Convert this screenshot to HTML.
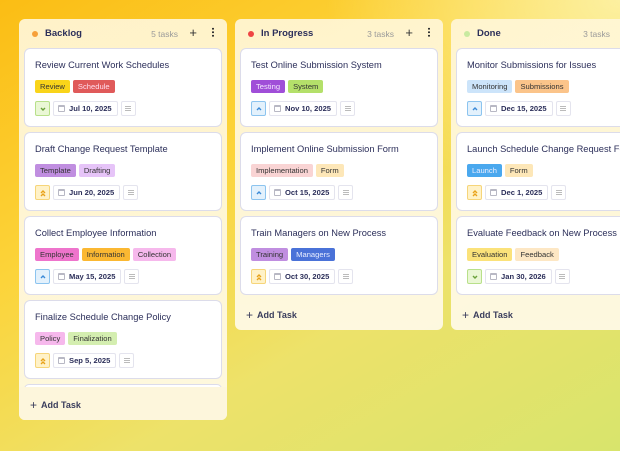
<!DOCTYPE html>
<html><head><meta charset="utf-8"><style>
*{box-sizing:border-box;margin:0;padding:0}
body{width:620px;height:451px;overflow:hidden;font-family:"Liberation Sans",sans-serif;color:#2c2f5a;
background:radial-gradient(ellipse 420px 300px at 620px 0px,#fdf0a0 0%,rgba(253,236,140,0) 70%),linear-gradient(150deg,#fbbd14 0%,#fcd43a 35%,#ede26a 65%,#d8e46c 100%);position:relative}
.col{position:absolute;top:19px;width:208px;border-radius:6px;background:linear-gradient(180deg,rgba(255,246,214,.93),rgba(255,250,232,.93));}
.hd{position:absolute;top:0;left:0;right:0;height:29px;display:flex;align-items:center;padding-left:13px;font-size:9.5px;font-weight:bold}
.dot{width:6px;height:6px;border-radius:50%;margin-right:7px}
.cnt{position:absolute;right:49px;top:10px;font-size:8.5px;color:#9a9a9a;font-weight:normal}
.plus{position:absolute;right:30px;top:6px;font-size:13px;font-weight:normal;color:#333}
.more{position:absolute;right:13px;top:8px;width:2px;height:10px;background:radial-gradient(circle,#333 0.9px,transparent 1.1px) 0 0/2px 3.5px}
.card{position:absolute;left:5px;width:198px;height:79px;background:#fff;border:1px solid #dcdcea;border-radius:6px}
.t{position:absolute;left:10px;top:11px;font-size:9.3px;white-space:nowrap}
.tags{position:absolute;left:10px;top:31px;display:flex;gap:3px}
.tag{height:13px;line-height:13px;padding:0 5px;border-radius:2px;font-size:7.6px;color:#333}
.ft{position:absolute;left:10px;top:52px;display:flex;gap:3px}
.pr{width:15px;height:15px;border-radius:2px;border:1px solid;display:flex;align-items:center;justify-content:center}
.pr svg{width:8px;height:8px;fill:none;stroke:currentColor;stroke-width:1.4}
.dt{height:15px;border:1px solid #e4e4ee;border-radius:2px;padding:0 5px 0 4px;font-size:7.6px;font-weight:bold;display:flex;align-items:center;gap:4px}
.cal{width:7px;height:7px;border:1px solid #b8b8c4;border-top-width:2px;border-radius:1px}
.ds{width:15px;height:15px;border:1px solid #e4e4ee;border-radius:2px;display:flex;align-items:center;justify-content:center}
.ds i{width:6px;height:5px;border-top:1px solid #bbb;border-bottom:1px solid #bbb;position:relative}
.ds i:after{content:"";position:absolute;left:0;top:1px;width:6px;border-top:1px solid #bbb}
.add{position:absolute;left:11px;font-size:9px;font-weight:bold;color:#3a3d5c}
.add b{font-weight:normal;font-size:12px;margin-right:4px;position:relative;top:1px}
.lo{background:#eaf7d5;border-color:#b8e08a;color:#6aa13a}
.md{background:#e3f1fc;border-color:#8cc4ef;color:#3b8ad8}
.hi{background:#fff2c8;border-color:#f6d57a;color:#e8a21a}
</style></head><body>
<svg width="0" height="0" style="position:absolute"><defs>
<symbol id="dn" viewBox="0 0 8 8"><path d="M2 3l2 2 2-2"/></symbol>
<symbol id="up" viewBox="0 0 8 8"><path d="M2 5l2-2 2 2"/></symbol>
<symbol id="uu" viewBox="0 0 8 8"><path d="M2 4l2-2 2 2M2 7l2-2 2 2"/></symbol>
</defs></svg>

<div class="col" style="left:19px;height:401px">
<div class="hd"><span class="dot" style="background:#f6a03a"></span>Backlog<span class="cnt">5 tasks</span><span class="plus">+</span><span class="more"></span></div>
<div class="card" style="top:29px"><div class="t">Review Current Work Schedules</div><div class="tags"><span class="tag" style="background:#f9d41a">Review</span><span class="tag" style="background:#e05a5a;color:#fde">Schedule</span></div><div class="ft"><span class="pr lo"><svg><use href="#dn"/></svg></span><span class="dt"><i class="cal"></i>Jul 10, 2025</span><span class="ds"><i></i></span></div></div>
<div class="card" style="top:113px"><div class="t">Draft Change Request Template</div><div class="tags"><span class="tag" style="background:#c08ee0">Template</span><span class="tag" style="background:#e6c4f8">Drafting</span></div><div class="ft"><span class="pr hi"><svg><use href="#uu"/></svg></span><span class="dt"><i class="cal"></i>Jun 20, 2025</span><span class="ds"><i></i></span></div></div>
<div class="card" style="top:197px"><div class="t">Collect Employee Information</div><div class="tags"><span class="tag" style="background:#ee74cc">Employee</span><span class="tag" style="background:#fbb832">Information</span><span class="tag" style="background:#f6b8ec">Collection</span></div><div class="ft"><span class="pr md"><svg><use href="#up"/></svg></span><span class="dt"><i class="cal"></i>May 15, 2025</span><span class="ds"><i></i></span></div></div>
<div class="card" style="top:281px"><div class="t">Finalize Schedule Change Policy</div><div class="tags"><span class="tag" style="background:#f6b8ec">Policy</span><span class="tag" style="background:#d4eeb0">Finalization</span></div><div class="ft"><span class="pr hi"><svg><use href="#uu"/></svg></span><span class="dt"><i class="cal"></i>Sep 5, 2025</span><span class="ds"><i></i></span></div></div>
<div class="card" style="top:365px;height:5px;border-bottom:none;border-radius:6px 6px 0 0"></div>
<div style="position:absolute;left:0;right:0;top:368px;height:33px;background:#fdf6dc;border-radius:0 0 6px 6px"></div>
<div class="add" style="top:378px"><b>+</b>Add Task</div>
</div>

<div class="col" style="left:235px;height:311px">
<div class="hd"><span class="dot" style="background:#ef4444"></span>In Progress<span class="cnt">3 tasks</span><span class="plus">+</span><span class="more"></span></div>
<div class="card" style="top:29px"><div class="t">Test Online Submission System</div><div class="tags"><span class="tag" style="background:#a04ed8;color:#f5e8ff">Testing</span><span class="tag" style="background:#b4e06a">System</span></div><div class="ft"><span class="pr md"><svg><use href="#up"/></svg></span><span class="dt"><i class="cal"></i>Nov 10, 2025</span><span class="ds"><i></i></span></div></div>
<div class="card" style="top:113px"><div class="t">Implement Online Submission Form</div><div class="tags"><span class="tag" style="background:#f9d4d4">Implementation</span><span class="tag" style="background:#fde7b8">Form</span></div><div class="ft"><span class="pr md"><svg><use href="#up"/></svg></span><span class="dt"><i class="cal"></i>Oct 15, 2025</span><span class="ds"><i></i></span></div></div>
<div class="card" style="top:197px"><div class="t">Train Managers on New Process</div><div class="tags"><span class="tag" style="background:#c08ee0">Training</span><span class="tag" style="background:#4a72d8;color:#e8eeff">Managers</span></div><div class="ft"><span class="pr hi"><svg><use href="#uu"/></svg></span><span class="dt"><i class="cal"></i>Oct 30, 2025</span><span class="ds"><i></i></span></div></div>
<div class="add" style="top:288px"><b>+</b>Add Task</div>
</div>

<div class="col" style="left:451px;height:311px">
<div class="hd"><span class="dot" style="background:#c8eaa0"></span>Done<span class="cnt">3 tasks</span></div>
<div class="card" style="top:29px"><div class="t">Monitor Submissions for Issues</div><div class="tags"><span class="tag" style="background:#cce4fa">Monitoring</span><span class="tag" style="background:#fbc48a">Submissions</span></div><div class="ft"><span class="pr md"><svg><use href="#up"/></svg></span><span class="dt"><i class="cal"></i>Dec 15, 2025</span><span class="ds"><i></i></span></div></div>
<div class="card" style="top:113px"><div class="t">Launch Schedule Change Request Form</div><div class="tags"><span class="tag" style="background:#4aa8ee;color:#eef">Launch</span><span class="tag" style="background:#fde7b8">Form</span></div><div class="ft"><span class="pr hi"><svg><use href="#uu"/></svg></span><span class="dt"><i class="cal"></i>Dec 1, 2025</span><span class="ds"><i></i></span></div></div>
<div class="card" style="top:197px"><div class="t">Evaluate Feedback on New Process</div><div class="tags"><span class="tag" style="background:#fbe27a">Evaluation</span><span class="tag" style="background:#fde7c4">Feedback</span></div><div class="ft"><span class="pr lo"><svg><use href="#dn"/></svg></span><span class="dt"><i class="cal"></i>Jan 30, 2026</span><span class="ds"><i></i></span></div></div>
<div class="add" style="top:288px"><b>+</b>Add Task</div>
</div>
</body></html>
